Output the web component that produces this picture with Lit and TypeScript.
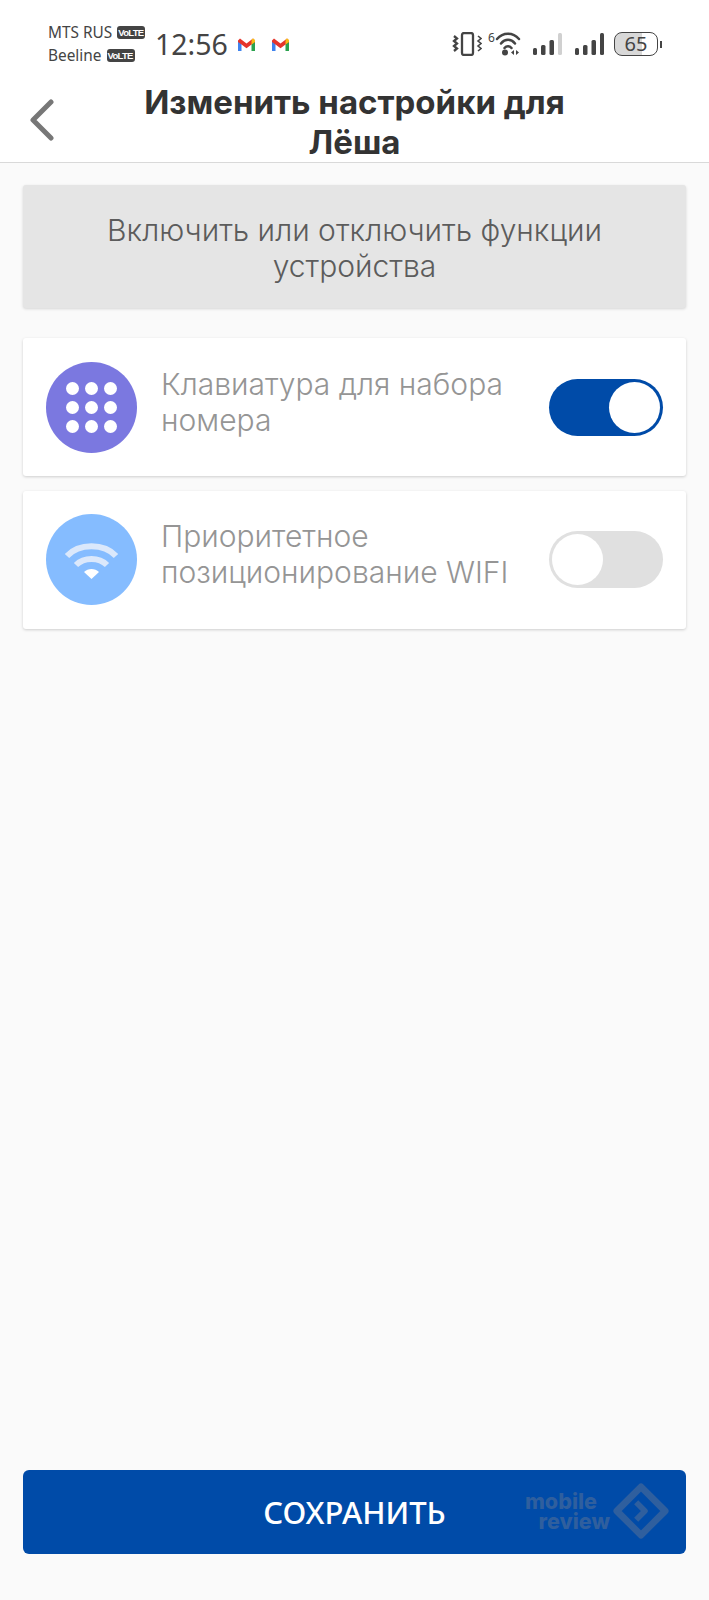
import { LitElement, css, html, svg } from 'lit';
import { customElement } from 'lit/decorators.js';

const gmail = html`<svg class="gmail" width="17" height="13" viewBox="0 0 17 13">
  <path d="M0 3v10h3.5V5z" fill="#3f83ee"/>
  <path d="M17 3v10h-3.5V5z" fill="#2ba24f"/>
  <path d="M0 2.6 L2 .6 L8.5 5.6 L15 .6 L17 2.6 V4 L13.500 6.600 L8.5 10.300 L3.500 6.600 L0 4z" fill="#e5352b"/>
  <path d="M14 1 L15.200 .4 L17 2 V4 L13.500 6.600V3z" fill="#f7bb16"/>
</svg>`;

const signal = (lastColor: string) => html`<svg class="signal" width="30" height="24" viewBox="0 0 30 24">
  <rect x="0" y="16" width="4" height="7" rx="1.500" fill="#444"/>
  <rect x="8" y="13" width="4.500" height="10" rx="1.500" fill="#444"/>
  <rect x="16.500" y="8" width="4.500" height="15" rx="1.500" fill="#444"/>
  <rect x="25" y="1" width="4" height="22" rx="1.500" fill=${lastColor}/>
</svg>`;

const dots = [0, 1, 2].flatMap((r) => [0, 1, 2].map((c) => svg`<circle cx=${26.500 + c * 19} cy=${26.500 + r * 19} r="6.500" fill="#fff"/>`));

@customElement('app-root')
export class AppRoot extends LitElement {
  static override styles = css`
    :host {
      display: block;
      width: 709px;
      height: 1600px;
      background: #fafafa;
      font-family: 'Inter', 'Noto Sans', sans-serif;
    }
    .page {
      height: 1600px;
      display: flex;
      flex-direction: column;
    }
    .top {
      background: #fff;
      border-bottom: 1px solid #d9d9d9;
      height: 163px;
      box-sizing: border-box;
    }
    .status {
      height: 80px;
      padding: 22px 47px 0 48px;
      box-sizing: border-box;
      display: flex;
      align-items: flex-start;
      color: #444;
    }
    .carriers {
      display: flex;
      flex-direction: column;
      gap: 6px;
      padding-top: 2px;
      font-family: 'Noto Sans', sans-serif;
      font-size: 15.400px;
      line-height: 17px;
      width: 107px;
    }
    .carrier {
      display: flex;
      align-items: center;
      gap: 5px;
    }
    .volte {
      background: #444;
      color: #fff;
      font-family: 'Liberation Sans', sans-serif;
      font-size: 9.500px;
      letter-spacing: -0.7px;
      font-weight: 700;
      line-height: 13px;
      padding: 0 2px 0 1px;
      border-radius: 3px;
    }
    .clock {
      font-family: 'Noto Sans', sans-serif;
      font-size: 28.500px;
      line-height: 44px;
      width: 83px;
    }
    .gmail {
      margin-top: 16px;
      margin-right: 17px;
    }
    .sys {
      margin-left: auto;
      margin-top: 10px;
      display: flex;
      align-items: flex-start;
    }
    .vibrate {
      margin-right: 6px;
    }
    .wifi-wrap {
      display: flex;
      align-items: flex-start;
      margin-right: 12px;
    }
    .six {
      font-size: 12px;
      line-height: 12px;
      width: 7px;
      font-family: 'Noto Sans', sans-serif;
    }
    .signal {
      margin-right: 12px;
    }
    .signal + .signal {
      margin-right: 9px;
    }
    .battery {
      display: flex;
      align-items: center;
      gap: 2px;
    }
    .cell {
      width: 44px;
      height: 24px;
      box-sizing: border-box;
      border: 1.500px solid #444;
      border-radius: 8px;
      background: linear-gradient(90deg, #d8d8d8 65%, #fff 65%);
      font-family: 'Noto Sans', sans-serif;
      font-size: 20px;
      line-height: 21px;
      text-align: center;
    }
    .nub {
      width: 2px;
      height: 7px;
      background: #444;
    }
    .title-row {
      display: grid;
      grid-template-columns: 120px 1fr 120px;
      align-items: center;
      height: 82px;
    }
    .back {
      margin-left: 29px;
      margin-bottom: 3px;
    }
    .title {
      margin: 0;
      padding-top: 2px;
      text-align: center;
      font-size: 33px;
      line-height: 40px;
      font-weight: 700;
      color: #333;
    }
    .content {
      flex: 1;
      padding: 22px 23px 46px;
      display: flex;
      flex-direction: column;
    }
    .banner {
      height: 123px;
      box-sizing: border-box;
      background: #e5e5e5;
      border-radius: 3px;
      box-shadow: 0 1px 3px rgba(0, 0, 0, 0.15);
      display: flex;
      align-items: center;
      justify-content: center;
      text-align: center;
      font-size: 30px;
      line-height: 36px;
      font-weight: 300;
      color: #5c5c5c;
      padding: 2px 60px 0;
      margin-bottom: 30px;
    }
    .card {
      height: 138px;
      box-sizing: border-box;
      background: #fff;
      border-radius: 3px;
      box-shadow: 0 1px 3px rgba(0, 0, 0, 0.18);
      display: flex;
      align-items: center;
      padding: 0 23px;
      margin-bottom: 14.500px;
    }
    .badge {
      flex: none;
      width: 91px;
      height: 91px;
      margin-right: 24px;
    }
    .label {
      flex: 1;
      font-size: 30px;
      line-height: 36px;
      font-weight: 300;
      color: #959595;
      padding-bottom: 11px;
    }
    .switch {
      flex: none;
      width: 114px;
      height: 57px;
      box-sizing: border-box;
      border-radius: 29px;
      display: flex;
      padding: 3px;
    }
    .switch.on {
      background: #004ba8;
      justify-content: flex-end;
    }
    .switch.off {
      background: #e0e0e0;
    }
    .knob {
      width: 51px;
      height: 51px;
      border-radius: 50%;
      background: #fff;
    }
    .save {
      margin-top: auto;
      height: 84px;
      background: #004ba8;
      border-radius: 6px;
      position: relative;
      display: flex;
      align-items: center;
      justify-content: center;
      font-size: 31px;
      font-weight: 500;
      color: #fff;
      font-family: 'Noto Sans', sans-serif;
    }
    .mark {
      position: absolute;
      right: 17px;
      top: 13px;
      display: flex;
      align-items: center;
      gap: 3px;
      color: #2f5f9e;
    }
    .mark-text {
      font-family: 'Inter', sans-serif;
      font-size: 21.500px;
      line-height: 20px;
      font-weight: 800;
      text-align: right;
    }
    .mobile {
      display: block;
      padding-right: 13px;
    }
    .review {
      display: block;
    }
  `;

  override render() {
    return html`<div class="page">
      <div class="top">
        <div class="status">
          <div class="carriers">
            <div class="carrier">MTS RUS <span class="volte">VoLTE</span></div>
            <div class="carrier">Beeline <span class="volte">VoLTE</span></div>
          </div>
          <div class="clock">12:56</div>
          ${gmail}${gmail}
          <div class="sys">
            <svg class="vibrate" width="30" height="24" viewBox="0 0 30 24" fill="none" stroke="#444" stroke-width="2.300">
              <rect x="10" y="1" width="11" height="22" rx="2"/>
              <path d="M2 4 l3 2.500 l-3 2.500 l3 2.500 l-3 2.500 l3 2.500 l-3 2.500"/>
              <path d="M26 4 l3 2.500 l-3 2.500 l3 2.500 l-3 2.500 l3 2.500 l-3 2.500" stroke-width="1.600"/>
            </svg>
            <div class="wifi-wrap">
              <span class="six">6</span>
              <svg width="26" height="24" viewBox="0 0 26 24" fill="none" stroke="#444" stroke-width="2.500" stroke-linecap="round">
                <path d="M2 7 C8 0 18 0 24 7"/>
                <path d="M6 11.500 C10 6.500 16 6.500 20 11.500"/>
                <path d="M9.500 16 C11.500 13.500 14.500 13.500 16.500 16"/>
                <circle cx="10" cy="20.500" r="3" fill="#444" stroke="none"/>
                <path d="M19 18 l-3 2.500 l3 2.500z M21 18 l3 2.500 l-3 2.500z" fill="#444" stroke="none"/>
              </svg>
            </div>
            ${signal('#d0d0d0')}
            ${signal('#444')}
            <div class="battery">
              <div class="cell">65</div>
              <div class="nub"></div>
            </div>
          </div>
        </div>
        <div class="title-row">
          <svg class="back" width="26" height="42" viewBox="0 0 26 42" fill="none" stroke="#777" stroke-width="5" stroke-linecap="round" stroke-linejoin="round">
            <path d="M22 3 L4 21 L22 39"/>
          </svg>
          <h1 class="title">Изменить настройки для Лёша</h1>
        </div>
      </div>

      <div class="content">
        <div class="banner">Включить или отключить функции устройства</div>

        <div class="card">
          <svg class="badge" viewBox="0 0 91 91">
            <circle cx="45.500" cy="45.500" r="45.500" fill="#7b78e0"/>
            ${dots}
          </svg>
          <div class="label">Клавиатура для набора номера</div>
          <div class="switch on"><div class="knob"></div></div>
        </div>

        <div class="card">
          <svg class="badge" viewBox="0 0 91 91">
            <circle cx="45.500" cy="45.500" r="45.500" fill="#85bcff"/>
            <g fill="none" stroke="#dbe8fb" stroke-width="6">
              <path d="M21 42 C33 29 58 29 70 42"/>
              <path d="M30 51 C38 43 53 43 61 51"/>
            </g>
            <path d="M38 58 C42 54 49 54 53 58 L45.500 65z" fill="#fff"/>
          </svg>
          <div class="label">Приоритетное позиционирование WIFI</div>
          <div class="switch off"><div class="knob"></div></div>
        </div>

        <div class="save">
          СОХРАНИТЬ
          <div class="mark">
            <div class="mark-text"><span class="mobile">mobile</span><span class="review">review</span></div>
            <svg width="56" height="56" viewBox="0 0 58 58" fill="none" stroke="#2f5f9e" stroke-linejoin="round">
              <path d="M29 4 L54 29 L29 54 L4 29z" stroke-width="7"/>
              <path d="M24 20 L33 29 L24 38" stroke-width="6"/>
            </svg>
          </div>
        </div>
      </div>
    </div>`;
  }
}
